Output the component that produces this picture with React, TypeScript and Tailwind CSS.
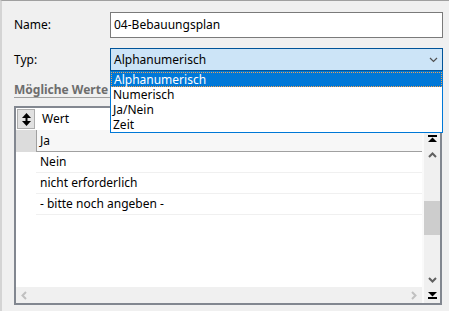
import { useState } from 'react';

const options = ['Alphanumerisch', 'Numerisch', 'Ja/Nein', 'Zeit'];
const rows = ['Nein', 'nicht erforderlich', '- bitte noch angeben -'];

function SortIcon() {
  return (
    <svg width="9" height="13" viewBox="0 0 9 13">
      <path d="M4.5 0 L9 5 L0 5 Z" fill="#000" />
      <path d="M4.5 13 L9 8 L0 8 Z" fill="#000" />
      <rect x="3.5" y="4" width="2" height="5" fill="#000" />
    </svg>
  );
}

function JumpIcon({ down = false }: { down?: boolean }) {
  return (
    <svg width="9" height="8" viewBox="0 0 9 8" className={down ? 'rotate-180' : ''}>
      <rect x="0" y="0" width="9" height="2" fill="#000" />
      <path d="M4.5 2.5 L9 7 L0 7 Z" fill="#000" />
    </svg>
  );
}

function Chevron({
  dir,
  color,
  width = 2,
}: {
  dir: 'up' | 'down' | 'left' | 'right';
  color: string;
  width?: number;
}) {
  const d = {
    up: 'M1 6 L4.5 2.5 L8 6',
    down: 'M1 3 L4.5 6.5 L8 3',
    left: 'M6 1 L2.5 4.5 L6 8',
    right: 'M3 1 L6.5 4.5 L3 8',
  }[dir];
  return (
    <svg width="9" height="9" viewBox="0 0 9 9">
      <path d={d} fill="none" stroke={color} strokeWidth={width} />
    </svg>
  );
}

export default function App() {
  const [selected] = useState(0);

  return (
    <div
      className="w-[449px] h-[311px] overflow-hidden bg-[#f0f0f0] border-t border-t-[#a0a0a0] border-l-2 border-l-[#d4d4d4] pl-3 pt-[11px] text-[12px] text-black"
      style={{ fontFamily: '"Noto Sans", "Segoe UI", sans-serif' }}
    >
      {/* Name */}
      <div className="flex items-center">
        <div className="w-[96px]">Name:</div>
        <div className="w-[333px] h-[26px] bg-white border border-[#7a7a7a] flex items-center px-[3px] leading-none">
          04-Bebauungsplan
        </div>
      </div>

      {/* Typ */}
      <div className="flex items-center mt-[10px]">
        <div className="w-[96px]">Typ:</div>
        <div className="relative w-[333px] h-[23px]">
          <div className="h-full bg-[#cce4f7] border border-[#005499] flex items-center justify-between pl-[3px] pr-[4px] leading-none">
            <span>Alphanumerisch</span>
            <Chevron dir="down" color="#505050" width={1.2} />
          </div>
          <div className="absolute left-0 top-full w-full z-10 bg-white border border-[#0078d7] flex flex-col leading-none">
            {options.map((o, i) => (
              <div
                key={o}
                className={
                  i === selected
                    ? 'h-[15px] flex items-center pl-[2px] bg-[#0078d7] text-white border border-dotted border-[#f0a050]'
                    : 'h-[15px] flex items-center pl-[2px]'
                }
              >
                {o}
              </div>
            ))}
          </div>
        </div>
      </div>

      {/* Mögliche Werte */}
      <div className="mt-[11px] w-[427px] border-b border-[#a0a0a0] font-bold text-[#6d6d6d] leading-[15px]">
        Mögliche Werte
      </div>

      {/* Grid */}
      <div className="mt-[8px] w-[428px] h-[199px] border-2 border-[#828790] bg-white flex flex-col">
        <div className="h-[22px] flex items-center">
          <div className="w-[18px] h-[20px] ml-px border border-[#adadad] bg-[#e1e1e1] flex items-center justify-center">
            <SortIcon />
          </div>
          <div className="ml-[7px] leading-none">Wert</div>
        </div>
        <div className="flex flex-1">
          <div className="flex flex-col w-[406px]">
            <div className="flex-1 flex flex-col">
              <div className="flex h-[22px]">
                <div className="w-[20px] bg-[#dcdcdc]" />
                <div className="flex-1 bg-[#f7f7f7] border-l border-b border-[#a0a0a0] flex items-center pl-[3px] leading-none">
                  Ja
                </div>
              </div>
              {rows.map((r) => (
                <div key={r} className="flex h-[21px]">
                  <div className="w-[20px]" />
                  <div className="flex-1 border-b border-[#f0f0f0] flex items-center pl-[4px] leading-none">
                    {r}
                  </div>
                </div>
              ))}
            </div>
            <div className="h-[16px] bg-[#f0f0f0] flex items-center justify-between px-[4px]">
              <Chevron dir="left" color="#c0c0c0" />
              <Chevron dir="right" color="#c0c0c0" />
            </div>
          </div>
          <div className="flex-1 flex flex-col bg-[#f0f0f0] border-l-2 border-[#fafafa]">
            <div className="h-[17px] flex items-center justify-center">
              <JumpIcon />
            </div>
            <div className="h-[16px] flex items-center justify-center">
              <Chevron dir="up" color="#606060" />
            </div>
            <div className="flex-1 flex flex-col">
              <div className="h-[38px]" />
              <div className="h-[34px] bg-[#cdcdcd]" />
            </div>
            <div className="h-[16px] flex items-center justify-center">
              <Chevron dir="down" color="#606060" />
            </div>
            <div className="h-[16px] flex items-center justify-center">
              <JumpIcon down />
            </div>
          </div>
        </div>
      </div>
    </div>
  );
}
